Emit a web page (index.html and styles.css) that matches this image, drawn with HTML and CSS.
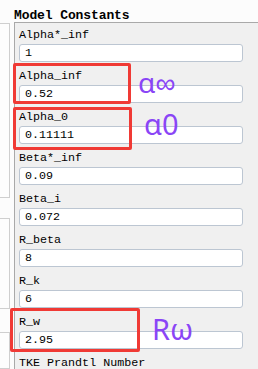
FILE: index.html
```html
<!DOCTYPE html>
<html>
<head>
<meta charset="utf-8">
<link rel="stylesheet" href="styles.css">
</head>
<body>
<div class="app">
  <aside class="side">
    <div class="sbox b1"></div>
    <div class="sbox b2"></div>
    <div class="sbox b3"></div>
  </aside>
  <main class="main">
    <div class="title"><span class="title-text">Model Constants</span></div>
    <div class="panel">
      <div class="field"><div class="label">Alpha*_inf</div><div class="input">1</div></div>
      <div class="field"><div class="label">Alpha_inf</div><div class="input">0.52</div></div>
      <div class="field"><div class="label">Alpha_0</div><div class="input">0.11111</div></div>
      <div class="field"><div class="label">Beta*_inf</div><div class="input">0.09</div></div>
      <div class="field"><div class="label">Beta_i</div><div class="input">0.072</div></div>
      <div class="field"><div class="label">R_beta</div><div class="input">8</div></div>
      <div class="field"><div class="label">R_k</div><div class="input">6</div></div>
      <div class="field"><div class="label">R_w</div><div class="input">2.95</div></div>
      <div class="field"><div class="label">TKE Prandtl Number</div></div>
    </div>
  </main>
  <div class="mark m1"></div>
  <div class="mark m2"></div>
  <div class="mark m3"></div>
  <div class="note n1">α∞</div>
  <div class="note n2">α0</div>
  <div class="note n3">Rω</div>
</div>
</body>
</html>
```
FILE: styles.css
```css
html, body {
  margin: 0;
  padding: 0;
  width: 258px;
  height: 369px;
  overflow: hidden;
  background: #fcfcfc;
}
.app {
  position: relative;
  display: flex;
  width: 258px;
  height: 369px;
  font-family: "Liberation Mono", "DejaVu Sans Mono", monospace;
  color: #000;
}
.side {
  width: 10px;
  flex: none;
  display: flex;
  flex-direction: column;
  padding-top: 23px;
  margin-right: 4px;
}
.sbox {
  box-sizing: border-box;
  background: #fdfdfd;
  border: 1px solid #cfcfcf;
  border-left: none;
}
.b1 { height: 189px; }
.b2 { height: 98px; margin-top: 20px; }
.b3 { height: 40px; margin-top: 23px; }
.main {
  flex: 1;
  display: flex;
  flex-direction: column;
  min-width: 0;
}
.title {
  height: 22px;
  background: #fcfcfc;
  white-space: nowrap;
}
.title-text {
  display: block;
  font-weight: bold;
  font-size: 13px;
  line-height: 14px;
  padding-top: 9px;
  letter-spacing: -0.1px;
}
.panel {
  flex: 1;
  background: #f0f0f0;
  border-top: 1px solid #a9a9a9;
  border-left: 1px solid #a9a9a9;
  padding-left: 4px;
}
.field {
  padding-top: 5px;
}
.field:first-child {
  padding-top: 3px;
}
.label {
  height: 18px;
  line-height: 18px;
  font-size: 11.7px;
  white-space: nowrap;
}
.input {
  box-sizing: border-box;
  width: 224px;
  height: 18px;
  line-height: 16px;
  background: #fff;
  border: 1px solid #bcc6d2;
  border-radius: 3px;
  padding-left: 5px;
  font-size: 11.7px;
}
.mark {
  position: absolute;
  box-sizing: border-box;
  border: 3px solid #f03a35;
  border-radius: 2px;
}
.m1 { left: 13px; top: 63px; width: 118px; height: 41px; }
.m2 { left: 13px; top: 107px; width: 119px; height: 43px; }
.m3 { left: 10px; top: 308px; width: 130px; height: 44px; }
.note {
  position: absolute;
  font-family: "Noto Sans", sans-serif;
  color: #8a45f6;
  line-height: 1;
  white-space: nowrap;
}
.n1 { left: 138px; top: 68px; font-size: 28px; }
.n2 { left: 144px; top: 109px; font-size: 29px; }
.n3 { left: 152px; top: 314px; font-size: 29px; }
```
